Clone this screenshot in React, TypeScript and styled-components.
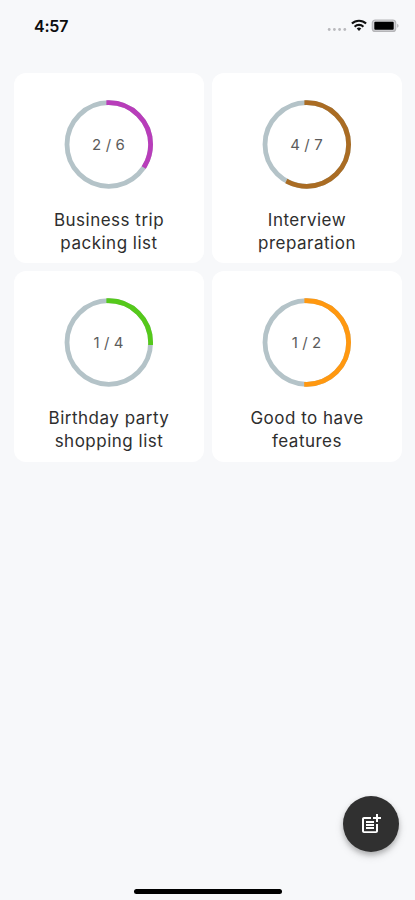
import React from 'react';
import styled, { createGlobalStyle } from 'styled-components';

const GlobalStyle = createGlobalStyle`
  * { box-sizing: border-box; }
  body { margin: 0; background: #f7f8fa; }
`;

const Screen = styled.div`
  display: flex;
  flex-direction: column;
  width: 100%;
  height: 900px;
  background: #f7f8fa;
  font-family: Inter, sans-serif;
  overflow: hidden;
`;

const StatusBar = styled.header`
  display: flex;
  justify-content: space-between;
  height: 73px;
  padding: 16px 16px 0 34px;
`;

const Clock = styled.time`
  font-size: 16px;
  line-height: 20px;
  font-weight: 600;
  letter-spacing: -0.2px;
  color: #0c0c0e;
`;

const StatusIcons = styled.div`
  display: flex;
  height: 20px;
`;

const Grid = styled.main`
  display: grid;
  grid-template-columns: repeat(2, 190px);
  grid-auto-rows: 190.4px;
  gap: 8px;
  padding-left: 14px;
  flex: 1;
  align-content: start;
`;

const Card = styled.section`
  display: flex;
  flex-direction: column;
  align-items: center;
  padding-top: 27px;
  border-radius: 12px;
  background: #fff;
`;

const RingBox = styled.div`
  display: grid;
  place-items: center;
  width: 89px;
  height: 89px;
  margin-right: 1px;
  & > * { grid-area: 1 / 1; }
`;

const Count = styled.span`
  font-size: 15px;
  line-height: 20px;
  letter-spacing: 0.1px;
  color: #5c5c5c;
`;

const Title = styled.h2`
  margin: 20px 0 0;
  font-size: 17px;
  line-height: 23px;
  font-weight: 400;
  letter-spacing: 0.5px;
  text-align: center;
  color: #2e2e2e;
`;

const TitleLine = styled.span`
  display: block;
`;

const Footer = styled.footer`
  display: flex;
  flex-direction: column;
  align-items: center;
`;

const AddButton = styled.button`
  display: grid;
  place-items: center;
  align-self: flex-end;
  width: 56px;
  height: 56px;
  margin: 0 16px 37.5px 0;
  padding: 0;
  border: 0;
  border-radius: 50%;
  background: #303030;
  box-shadow: 0 3px 5px rgba(0, 0, 0, 0.22), 0 4px 10px rgba(0, 0, 0, 0.12);
`;

const HomeIndicator = styled.div`
  width: 148px;
  height: 5px;
  margin-bottom: 6px;
  border-radius: 3px;
  background: #000;
`;

const lists = [
  { done: 2, total: 6, color: '#b83dba', lines: ['Business trip', 'packing list'] },
  { done: 4, total: 7, color: '#aa6c23', lines: ['Interview', 'preparation'] },
  { done: 1, total: 4, color: '#55c91b', lines: ['Birthday party', 'shopping list'] },
  { done: 1, total: 2, color: '#ff9810', lines: ['Good to have', 'features'] },
];

const R = 41.8;
const LENGTH = 2 * Math.PI * R;

function Ring({ done, total, color }: { done: number; total: number; color: string }) {
  return (
    <RingBox>
      <svg width="89" height="89" viewBox="0 0 89 89" fill="none" strokeWidth="4.8">
        <circle cx="44.8" cy="44.5" r={R} stroke="#b4c3c8" />
        <circle
          cx="44.8"
          cy="44.5"
          r={R}
          stroke={color}
          strokeLinecap="square"
          strokeDasharray={`${(LENGTH * done) / total} ${LENGTH}`}
          transform="rotate(-90 44.8 44.5)"
        />
      </svg>
      <Count>{done} / {total}</Count>
    </RingBox>
  );
}

function StatusGlyphs() {
  return (
    <svg width="74" height="20" viewBox="0 0 74 20">
      <g fill="#b9b9bd">
        <circle cx="4.2" cy="13.5" r="1.4" />
        <circle cx="9.4" cy="13.5" r="1.4" />
        <circle cx="14.6" cy="13.5" r="1.4" />
        <circle cx="19.8" cy="13.5" r="1.4" />
      </g>
      <g fill="none" stroke="#111" strokeWidth="2.1">
        <path d="M26.9 7.6a10.2 10.2 0 0 1 14.2 0" />
        <path d="M29.6 10.7a6.3 6.3 0 0 1 8.8 0" />
      </g>
      <path d="M34 15l-2.3-2.4a3.4 3.4 0 0 1 4.6 0z" fill="#111" />
      <rect x="47.3" y="4" width="23.4" height="11.4" rx="3" fill="#d2d2d5" stroke="#b5b5b8" strokeWidth="1.2" />
      <rect x="49.3" y="5.7" width="19.4" height="8" rx="1" fill="#000" />
      <path d="M72.2 7.7v4c1.8-.6 1.8-3.4 0-4z" fill="#b5b5b8" />
    </svg>
  );
}

export default function App() {
  return (
    <Screen>
      <GlobalStyle />
      <StatusBar>
        <Clock>4:57</Clock>
        <StatusIcons><StatusGlyphs /></StatusIcons>
      </StatusBar>
      <Grid>
        {lists.map(({ lines, ...ring }) => (
          <Card key={lines[0]}>
            <Ring {...ring} />
            <Title>
              {lines.map((text) => <TitleLine key={text}>{text}</TitleLine>)}
            </Title>
          </Card>
        ))}
      </Grid>
      <Footer>
        <AddButton aria-label="Add list">
          <svg width="24" height="24" viewBox="0 0 24 24" fill="#fff">
            <path d="M17 19.22H5V7h7V5H5c-1.1 0-2 .9-2 2v12c0 1.1.9 2 2 2h12c1.1 0 2-.9 2-2v-7h-2v7.22z" />
            <path d="M19 2h-2v3h-3v2h3v3h2V7h3V5h-3V2zM7 9h8v2H7zM7 12v2h8v-2H7zM7 15h8v2H7z" />
          </svg>
        </AddButton>
        <HomeIndicator />
      </Footer>
    </Screen>
  );
}
